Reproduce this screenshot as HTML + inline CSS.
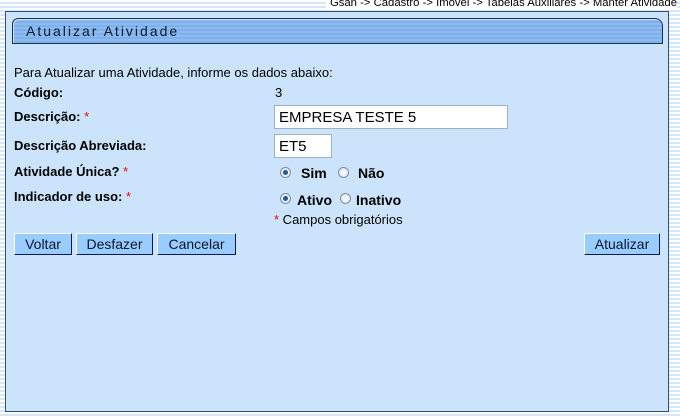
<!DOCTYPE html>
<html><head><style>
body{margin:0;width:680px;height:417px;overflow:hidden;font-family:"Liberation Sans",sans-serif;font-size:13px;color:#000;
background:repeating-linear-gradient(#fff 0 2px,#d6e8f8 2px 4px);position:relative}
.bc{position:absolute;right:3px;top:-3px;font-size:11.3px;color:#000;background:#fff;padding-left:4px}
.panel{position:absolute;left:5px;top:11px;width:662px;height:399px;background:#cbe4fb;border:1px solid #34506e}
.tab{position:absolute;left:6px;top:6px;width:649px;height:24px;border:1px solid #1f2f4a;border-radius:6px 8px 0 0;
background:repeating-linear-gradient(#8fbcf0 0 2px,#7eb0ec 2px 4px);box-shadow:inset 1px 1px 0 #c8e0fa}
.tab span{position:absolute;left:13px;top:4px;font-size:14px;letter-spacing:2px;color:#0c1a30}
.t{position:absolute;white-space:nowrap}
b{font-weight:bold}
.r{color:#e00}
.in{position:absolute;background:#fff;border:1px solid #a0b0c0;font-size:15px;padding:3px 4px;box-sizing:border-box}
.rad{position:absolute;width:11px;height:11px;border-radius:50%;border:1px solid #7d8fa0;background:radial-gradient(#fff,#dde);box-sizing:border-box}
.rad.on::after{content:"";position:absolute;left:2px;top:2px;width:5px;height:5px;border-radius:50%;background:#1d5c98}
.btn{position:absolute;top:233px;height:22px;background:#99ccff;border:1px solid;border-color:#fff #101850 #101850 #fff;box-sizing:border-box;font-size:14px;text-align:center;line-height:20px;color:#0a1530}
</style></head><body>
<div class="bc">Gsan -&gt; Cadastro -&gt; Imovel -&gt; Tabelas Auxiliares -&gt; Manter Atividade</div>
<div class="panel"><div class="tab"><span>Atualizar Atividade</span></div></div>
<div class="t" style="left:14px;top:65px">Para Atualizar uma Atividade, informe os dados abaixo:</div>
<div class="t" style="left:14px;top:85px"><b>Código:</b></div>
<div class="t" style="left:275px;top:85px">3</div>
<div class="t" style="left:14px;top:109px"><b>Descrição:</b> <span class="r">*</span></div>
<div class="in" style="left:274px;top:105px;width:234px;height:24px">EMPRESA TESTE 5</div>
<div class="t" style="left:14px;top:138px"><b>Descrição Abreviada:</b></div>
<div class="in" style="left:274px;top:134px;width:58px;height:24px">ET5</div>
<div class="t" style="left:14px;top:164px"><b>Atividade Única?</b> <span class="r">*</span></div>
<div class="rad on" style="left:280px;top:167px"></div>
<div class="t" style="left:301px;top:165px;font-size:14px"><b>Sim</b></div>
<div class="rad" style="left:338px;top:167px"></div>
<div class="t" style="left:358px;top:165px;font-size:14px"><b>Não</b></div>
<div class="t" style="left:14px;top:189px"><b>Indicador de uso:</b> <span class="r">*</span></div>
<div class="rad on" style="left:280px;top:193px"></div>
<div class="t" style="left:297px;top:192px;font-size:14px"><b>Ativo</b></div>
<div class="rad" style="left:340px;top:193px"></div>
<div class="t" style="left:356px;top:192px;font-size:14px"><b>Inativo</b></div>
<div class="t" style="left:274px;top:212px"><span class="r">*</span> Campos obrigatórios</div>
<div class="btn" style="left:14px;width:58px">Voltar</div>
<div class="btn" style="left:76px;width:77px">Desfazer</div>
<div class="btn" style="left:157px;width:79px">Cancelar</div>
<div class="btn" style="left:584px;width:76px">Atualizar</div>
</body></html>
